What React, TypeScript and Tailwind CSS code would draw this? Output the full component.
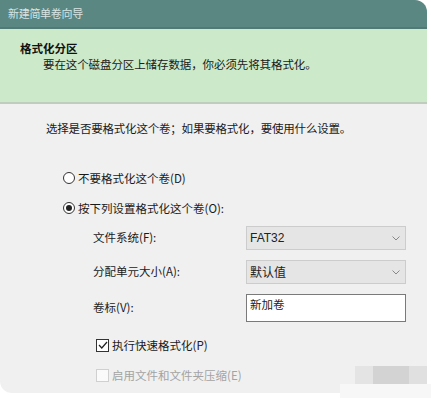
import React from 'react'

const font = { fontFamily: '"Noto Sans CJK SC", "Noto Sans", sans-serif' }

const Radio: React.FC<{ checked?: boolean; label: string }> = ({ checked, label }) => (
  <div className="flex items-center h-4 gap-[3px]">
    <span className="w-3 h-3 rounded-full border border-[#333] bg-white flex items-center justify-center">
      {checked && <span className="w-[6px] h-[6px] rounded-full bg-[#222]" />}
    </span>
    <span className="text-[11.5px] text-[#1a1a1a] leading-4">{label}</span>
  </div>
)

const Combo: React.FC<{ value: string; latin?: boolean }> = ({ value, latin }) => (
  <div className="w-[160px] h-6 bg-[#e5e5e5] border border-[#cccccc] flex items-center justify-between pl-[3px] pr-[5px]">
    <span
      className="text-[12px] text-[#222]"
      style={latin ? { fontFamily: '"Liberation Sans", "Noto Sans CJK SC", sans-serif' } : undefined}
    >
      {value}
    </span>
    <svg width="8" height="5" viewBox="0 0 8 5" fill="none">
      <path d="M0.5 0.5 L4 4 L7.5 0.5" stroke="#888" strokeWidth="1" />
    </svg>
  </div>
)

const App: React.FC = () => {
  return (
    <div className="w-[431px] h-[398px] bg-white relative overflow-hidden" style={font}>
      <div className="w-[427px] h-[393px] rounded-tr-[12px] rounded-bl-[12px] overflow-hidden flex flex-col bg-[#f0f0f0]">
        {/* Title bar */}
        <div className="h-[29px] bg-[#5b8783] border-b-2 border-[#4f7a75] flex items-center pl-2">
          <span className="text-[11px] text-[#d8e4e2] tracking-[-0.3px]">新建简单卷向导</span>
        </div>

        {/* Header */}
        <div className="h-[75px] bg-[#cceac9] border-b-2 border-[#c0ccbe] pt-[11px] pl-5">
          <div className="text-[11.5px] font-bold text-[#111] leading-4">格式化分区</div>
          <div className="text-[11.5px] text-[#1a1a1a] leading-4 pl-[23px] tracking-[-0.1px]">
            要在这个磁盘分区上储存数据，你必须先将其格式化。
          </div>
        </div>

        {/* Body */}
        <div className="flex-1 pt-4 pl-[46px]">
          <div className="text-[11.5px] text-[#1a1a1a] leading-4 tracking-[-0.2px]">
            选择是否要格式化这个卷；如果要格式化，要使用什么设置。
          </div>

          <div className="pl-[17px] mt-[34px] flex flex-col gap-[14px]">
            <Radio label="不要格式化这个卷(D)" />
            <Radio checked label="按下列设置格式化这个卷(O):" />
          </div>

          <div className="pl-[47px] mt-[10px] grid grid-cols-[153px_160px] gap-y-[10px] items-center">
            <span className="text-[11.5px] text-[#1a1a1a]">文件系统(F):</span>
            <Combo value="FAT32" latin />
            <span className="text-[11.5px] text-[#1a1a1a] -mt-[1px]">分配单元大小(A):</span>
            <Combo value="默认值" />
            <span className="text-[11.5px] text-[#1a1a1a]">卷标(V):</span>
            <div className="w-[160px] h-[28px] bg-white border border-[#7a7a7a] px-[3px] pt-[1px] text-[11.5px] leading-4 text-[#222]">
              新加卷
            </div>
          </div>

          <div className="pl-[50px] mt-[15px] flex flex-col gap-[14px]">
            <div className="flex items-center h-4 gap-[3px]">
              <span className="w-[13px] h-[13px] border border-[#333] bg-white flex items-center justify-center">
                <svg width="10" height="8" viewBox="0 0 10 8" fill="none">
                  <path d="M1 4 L3.8 7 L9 1" stroke="#222" strokeWidth="1.2" />
                </svg>
              </span>
              <span className="text-[11.5px] text-[#1a1a1a] leading-4">执行快速格式化(P)</span>
            </div>
            <div className="flex items-center h-4 gap-[3px]">
              <span className="w-[13px] h-[13px] border border-[#d0d0d0] bg-[#fafafa]" />
              <span className="text-[11.5px] text-[#a3a3a3] leading-4">启用文件和文件夹压缩(E)</span>
            </div>
          </div>
        </div>
      </div>

      {/* blurred watermark */}
      <div className="absolute left-[355px] top-[366px] w-[18px] h-[18px] bg-[#e4e4e4]" />
      <div className="absolute left-[373px] top-[366px] w-[36px] h-[18px] bg-[#d3d3d3]" />
      <div className="absolute left-[409px] top-[366px] w-[18px] h-[18px] bg-[#e0e0e0]" />
      <div className="absolute left-[340px] top-[384px] w-[91px] h-[14px] bg-[#f7f7f7]" />
    </div>
  )
}

export default App
